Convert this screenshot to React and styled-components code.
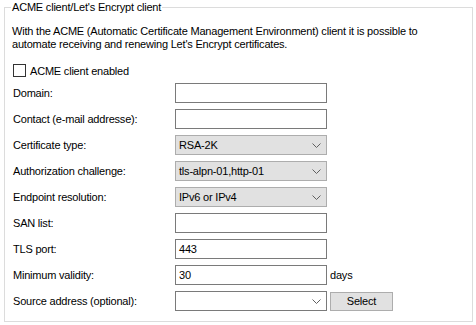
import React from "react";
import styled, { createGlobalStyle } from "styled-components";

const GlobalStyle = createGlobalStyle`
  html, body {
    margin: 0;
    padding: 0;
    background: #fff;
  }
  body {
    font-family: "Liberation Sans", Arial, sans-serif;
    font-size: 11px;
    letter-spacing: -0.2px;
    color: #000;
  }
`;

const Page = styled.div`
  width: 476px;
  height: 325px;
  padding: 0 0 0 4px;
  box-sizing: border-box;
`;

const Group = styled.fieldset`
  margin: 0;
  width: 469px;
  height: 322px;
  box-sizing: border-box;
  border: 1px solid #dcdcdc;
  padding: 0 6px 0 6px;
`;

const Legend = styled.legend`
  padding: 0 1px;
  line-height: 14px;
`;

const Intro = styled.p`
  margin: 11px 0 0 1px;
  line-height: 13px;
`;

const CheckRow = styled.label`
  display: flex;
  align-items: center;
  gap: 4px;
  margin: 13px 0 0 2px;
  height: 13px;
`;

const Box = styled.span`
  width: 13px;
  height: 13px;
  box-sizing: border-box;
  border: 1px solid #333;
  background: #fff;
`;

const Form = styled.div`
  display: grid;
  grid-template-columns: 162px 152px auto;
  grid-auto-rows: 20px;
  row-gap: 6px;
  align-items: center;
  margin: 6px 0 0 2px;
`;

const Label = styled.span`
  grid-column: 1;
`;

const Field = styled.div`
  grid-column: 2;
  height: 20px;
  box-sizing: border-box;
  border: 1px solid ${(p) => (p.$combo ? "#adadad" : "#7a7a7a")};
  background: ${(p) => (p.$combo ? "#e1e1e1" : "#fff")};
  display: flex;
  align-items: center;
  padding: 0 3px;
`;

const Value = styled.span`
  flex: 1;
`;

const Chevron = () => (
  <svg width="9" height="5" viewBox="0 0 9 5" style={{ marginRight: 2 }}>
    <path d="M0.5 0.5 L4.5 4.5 L8.5 0.5" fill="none" stroke="#606060" strokeWidth="1" />
  </svg>
);

const Suffix = styled.span`
  grid-column: 3;
  padding-left: 3px;
  display: flex;
  align-items: center;
`;

const Button = styled.button`
  margin-left: 0;
  width: 63px;
  height: 19px;
  box-sizing: border-box;
  border: 1px solid #adadad;
  background: #e1e1e1;
  font: inherit;
  letter-spacing: inherit;
  color: #000;
  padding: 0;
`;

const rows = [
  { label: "Domain:" },
  { label: "Contact (e-mail addresse):" },
  { label: "Certificate type:", value: "RSA-2K", combo: true },
  { label: "Authorization challenge:", value: "tls-alpn-01,http-01", combo: true },
  { label: "Endpoint resolution:", value: "IPv6 or IPv4", combo: true },
  { label: "SAN list:" },
  { label: "TLS port:", value: "443" },
  { label: "Minimum validity:", value: "30", suffix: "days" },
  { label: "Source address (optional):", dropdown: true, button: "Select" },
];

export default function App() {
  return (
    <Page>
      <GlobalStyle />
      <Group>
        <Legend>ACME client/Let's Encrypt client</Legend>
        <Intro>
          With the ACME (Automatic Certificate Management Environment) client it is possible to
          <br />
          automate receiving and renewing Let's Encrypt certificates.
        </Intro>
        <CheckRow>
          <Box />
          ACME client enabled
        </CheckRow>
        <Form>
          {rows.map((r) => (
            <React.Fragment key={r.label}>
              <Label>{r.label}</Label>
              <Field $combo={r.combo}>
                <Value>{r.value}</Value>
                {(r.combo || r.dropdown) && <Chevron />}
              </Field>
              {r.suffix && <Suffix>{r.suffix}</Suffix>}
              {r.button && (
                <Suffix>
                  <Button>{r.button}</Button>
                </Suffix>
              )}
            </React.Fragment>
          ))}
        </Form>
      </Group>
    </Page>
  );
}
